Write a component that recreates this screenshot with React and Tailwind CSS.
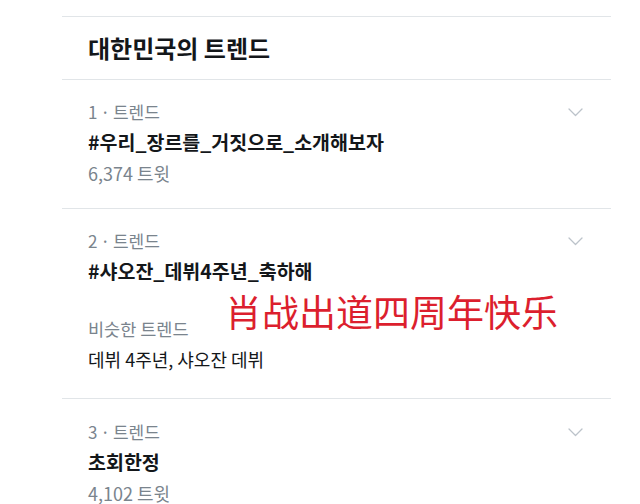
import React from "react";

const KR = { fontFamily: '"Noto Sans CJK KR", "Noto Sans", sans-serif' };

function Chevron() {
  return (
    <svg width="15" height="9" viewBox="0 0 15 9" fill="none" className="shrink-0">
      <path d="M1 1l6.5 6.5L14 1" stroke="#bcc3ca" strokeWidth="1.3" strokeLinecap="round" strokeLinejoin="round" />
    </svg>
  );
}

function Label({ n }) {
  return (
    <div className="flex items-center justify-between h-[30px]">
      <span className="text-[17px] text-[#7a848d]">
        {n}
        <span className="mx-[3px]">·</span>
        트렌드
      </span>
      <Chevron />
    </div>
  );
}

export default function App() {
  return (
    <div className="w-[640px] h-[504px] overflow-hidden bg-white" style={KR}>
      <div className="ml-[62px] mr-[29px] mt-[16px] border-t border-[#e1e5e8]">
        {/* header */}
        <div className="h-[63px] flex items-center pl-[26px] border-b border-[#e1e5e8]">
          <h1 className="text-[24px] font-bold text-[#14171a]">대한민국의 트렌드</h1>
        </div>

        {/* trend 1 */}
        <div className="pl-[26px] pr-[28px] pt-[17px] pb-[19px] border-b border-[#e1e5e8]">
          <Label n="1" />
          <div className="h-[30px] flex items-center text-[19.5px] font-bold text-[#14171a]">
            #우리_장르를_거짓으로_소개해보자
          </div>
          <div className="h-[32px] flex items-center text-[18px] text-[#7a848d]">6,374 트윗</div>
        </div>

        {/* trend 2 */}
        <div className="relative pl-[26px] pr-[28px] pt-[17px] pb-[24px] border-b border-[#e1e5e8]">
          <Label n="2" />
          <div className="h-[30px] flex items-center text-[19.5px] font-bold text-[#14171a]">
            #샤오잔_데뷔4주년_축하해
          </div>
          <div className="mt-[28px] h-[30px] flex items-center text-[17.5px] text-[#7a848d]">비슷한 트렌드</div>
          <div className="h-[30px] flex items-center text-[18px] text-[#14171a]">데뷔 4주년, 샤오잔 데뷔</div>
          <div
            className="absolute left-[163px] top-[84px] text-[37px] leading-none text-[#dc1f2e]"
            style={{ fontFamily: '"Noto Sans CJK SC", sans-serif' }}
          >
            肖战出道四周年快乐
          </div>
        </div>

        {/* trend 3 */}
        <div className="pl-[26px] pr-[28px] pt-[18px]">
          <Label n="3" />
          <div className="h-[30px] flex items-center text-[19.5px] font-bold text-[#14171a]">초회한정</div>
          <div className="h-[32px] flex items-center text-[18px] text-[#7a848d]">4,102 트윗</div>
        </div>
      </div>
    </div>
  );
}
